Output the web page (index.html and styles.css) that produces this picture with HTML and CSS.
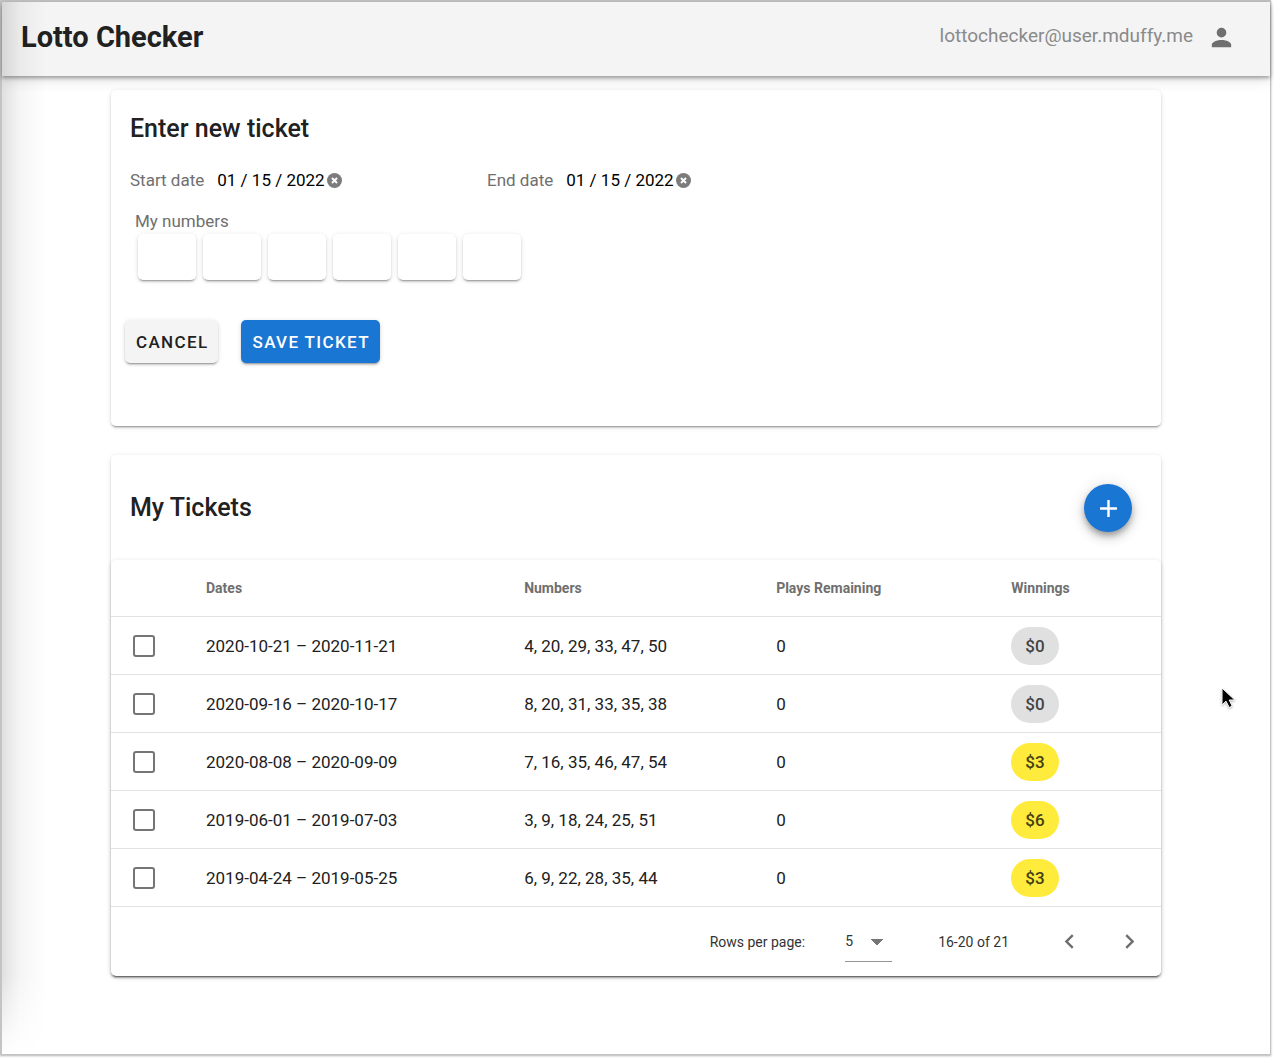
FILE: index.html
```html
<!DOCTYPE html>
<html lang="en">
<head>
<meta charset="utf-8">
<meta name="viewport" content="width=device-width, initial-scale=1">
<title>Lotto Checker</title>
<link rel="stylesheet" href="styles.css">
</head>
<body>
<div class="app">
  <header class="app-bar">
    <h1 class="app-title">Lotto Checker</h1>
    <div class="account">
      <span class="account-email">lottochecker@user.mduffy.me</span>
      <button class="icon-button account-button" type="button" aria-label="Account">
        <svg class="icon icon-account" viewBox="0 0 24 24"><path d="M12 4a4 4 0 1 1 0 8 4 4 0 0 1 0-8m0 10c4.420 0 8 1.790 8 4v2H4v-2c0-2.210 3.580-4 8-4z"/></svg>
      </button>
    </div>
  </header>

  <main class="content">
    <form class="card ticket-form">
      <h2 class="card-title">Enter new ticket</h2>
      <div class="dates">
        <div class="date-field">
          <label for="start-date">Start date</label>
          <input class="date-input" id="start-date" type="text" value="01 / 15 / 2022">
          <button class="icon-button" type="button" aria-label="Clear start date">
            <svg class="icon-clear" viewBox="0 0 16 16"><circle cx="8" cy="8" r="8"/><path d="M5.300 5.300l5.400 5.400M10.700 5.300l-5.400 5.400"/></svg>
          </button>
        </div>
        <div class="date-field">
          <label for="end-date">End date</label>
          <input class="date-input" id="end-date" type="text" value="01 / 15 / 2022">
          <button class="icon-button" type="button" aria-label="Clear end date">
            <svg class="icon-clear" viewBox="0 0 16 16"><circle cx="8" cy="8" r="8"/><path d="M5.300 5.300l5.400 5.400M10.700 5.300l-5.400 5.400"/></svg>
          </button>
        </div>
      </div>
      <fieldset class="numbers">
        <legend>My numbers</legend>
        <div class="number-row">
          <input class="number-input" type="text" inputmode="numeric" aria-label="Number 1">
          <input class="number-input" type="text" inputmode="numeric" aria-label="Number 2">
          <input class="number-input" type="text" inputmode="numeric" aria-label="Number 3">
          <input class="number-input" type="text" inputmode="numeric" aria-label="Number 4">
          <input class="number-input" type="text" inputmode="numeric" aria-label="Number 5">
          <input class="number-input" type="text" inputmode="numeric" aria-label="Number 6">
        </div>
      </fieldset>
      <div class="actions">
        <button class="button" type="button">CANCEL</button>
        <button class="button button-primary" type="submit">SAVE TICKET</button>
      </div>
    </form>

    <section class="card">
      <div class="tickets-head">
        <h2 class="card-title">My Tickets</h2>
        <button class="fab" type="button" aria-label="Add ticket">
          <svg class="icon-plus" viewBox="0 0 24 24"><path d="M19 13h-6v6h-2v-6H5v-2h6V5h2v6h6z"/></svg>
        </button>
      </div>
      <div class="tickets-body">
        <table class="tickets">
          <thead>
            <tr>
              <th class="col-check"></th>
              <th class="col-dates">Dates</th>
              <th class="col-numbers">Numbers</th>
              <th class="col-plays">Plays Remaining</th>
              <th>Winnings</th>
            </tr>
          </thead>
          <tbody>
            <tr>
              <td><input class="checkbox" type="checkbox" aria-label="Select 2020-10-21 – 2020-11-21"></td>
              <td>2020-10-21 – 2020-11-21</td>
              <td>4, 20, 29, 33, 47, 50</td>
              <td>0</td>
              <td><span class="chip">$0</span></td>
            </tr>
            <tr>
              <td><input class="checkbox" type="checkbox" aria-label="Select 2020-09-16 – 2020-10-17"></td>
              <td>2020-09-16 – 2020-10-17</td>
              <td>8, 20, 31, 33, 35, 38</td>
              <td>0</td>
              <td><span class="chip">$0</span></td>
            </tr>
            <tr>
              <td><input class="checkbox" type="checkbox" aria-label="Select 2020-08-08 – 2020-09-09"></td>
              <td>2020-08-08 – 2020-09-09</td>
              <td>7, 16, 35, 46, 47, 54</td>
              <td>0</td>
              <td><span class="chip chip-win">$3</span></td>
            </tr>
            <tr>
              <td><input class="checkbox" type="checkbox" aria-label="Select 2019-06-01 – 2019-07-03"></td>
              <td>2019-06-01 – 2019-07-03</td>
              <td>3, 9, 18, 24, 25, 51</td>
              <td>0</td>
              <td><span class="chip chip-win">$6</span></td>
            </tr>
            <tr>
              <td><input class="checkbox" type="checkbox" aria-label="Select 2019-04-24 – 2019-05-25"></td>
              <td>2019-04-24 – 2019-05-25</td>
              <td>6, 9, 22, 28, 35, 44</td>
              <td>0</td>
              <td><span class="chip chip-win">$3</span></td>
            </tr>
          </tbody>
        </table>
        <div class="pager">
          <label for="page-size">Rows per page:</label>
          <select class="page-size" id="page-size">
            <option>5</option>
            <option>10</option>
            <option>15</option>
          </select>
          <span class="page-range">16-20 of 21</span>
          <div class="page-nav">
            <button class="icon-button" type="button" aria-label="Previous page">
              <svg class="icon" viewBox="0 0 24 24"><path d="M15.410 16.580L10.830 12l4.580-4.590L14 6l-6 6 6 6z"/></svg>
            </button>
            <button class="icon-button" type="button" aria-label="Next page">
              <svg class="icon" viewBox="0 0 24 24"><path d="M8.590 16.580L13.170 12 8.590 7.410 10 6l6 6-6 6z"/></svg>
            </button>
          </div>
        </div>
      </div>
    </section>
  </main>
  <svg class="cursor" viewBox="0 0 18 26" aria-hidden="true"><path d="M2 2v17l4-3.800 3.200 6.300 3-1.400-3-6.100h5.600z"/></svg>
</div>
</body>
</html>
```
FILE: styles.css
```css
*,
*::before,
*::after {
  box-sizing: border-box;
}

body {
  margin: 0;
  background: #fff;
  color: #212121;
  font-family: Roboto, "Liberation Sans", sans-serif;
  font-size: 17px;
  line-height: 24px;
}

h1,
h2 {
  margin: 0;
}

button,
input,
select {
  font: inherit;
}

.app {
  position: relative;
  min-height: calc(100vh - 3px);
  margin: 0 3px 3px 0;
  border: solid #c4c4c4;
  border-width: 2px 1px 1px 2px;
  box-shadow: 0 1px 2px rgba(0, 0, 0, 0.3);
}

.app::before {
  content: "";
  position: absolute;
  z-index: 2;
  inset: 0 auto 0 0;
  width: 44px;
  background: linear-gradient(to right, rgba(0, 0, 0, 0.12), rgba(0, 0, 0, 0.04) 40%, transparent);
  -webkit-mask-image: linear-gradient(#000 calc(100% - 80px), transparent);
  mask-image: linear-gradient(#000 calc(100% - 80px), transparent);
  pointer-events: none;
}

.app-bar {
  display: flex;
  align-items: center;
  justify-content: space-between;
  height: 74px;
  padding: 0 34px 4px 19px;
  background: #f4f4f4;
  box-shadow: 0 2px 4px rgba(0, 0, 0, 0.35), 0 5px 12px rgba(0, 0, 0, 0.1);
}

.app-title {
  font-size: 29px;
  font-weight: 700;
  line-height: 36px;
}

.account {
  display: flex;
  align-items: center;
  gap: 14px;
  color: #8a8a8a;
  font-size: 19px;
}

.account-email {
  padding-bottom: 2px;
}

.icon-button {
  display: flex;
  padding: 0;
  border: 0;
  background: none;
  color: #6f6f6f;
}

.icon {
  width: 29px;
  height: 29px;
  fill: currentColor;
}

.content {
  display: flex;
  flex-direction: column;
  gap: 29px;
  max-width: 1050px;
  margin: 0 auto;
  padding: 14px 0 76px;
}

.card,
.tickets-body,
.number-input,
.button {
  border-radius: 5px;
  box-shadow: 0 3px 1px -2px rgba(0, 0, 0, 0.2), 0 2px 2px rgba(0, 0, 0, 0.14), 0 1px 5px rgba(0, 0, 0, 0.12);
}

.card {
  background: #fff;
}

.card-title {
  font-size: 25px;
  font-weight: 500;
  line-height: 38px;
}

.ticket-form {
  padding: 20px 19px 63px;
}

.dates {
  display: flex;
  margin-top: 20px;
}

.date-field {
  display: flex;
  align-items: center;
  width: 357px;
  color: #6f6f6f;
}

.date-input {
  width: 108px;
  height: 24px;
  margin: 0 2px 0 13px;
  padding: 0;
  border: 0;
  background: none;
  color: #000;
}

.icon-clear {
  width: 15px;
  height: 15px;
  fill: #7c7c7c;
  stroke: #fff;
  stroke-width: 2;
}

.icon-clear circle {
  stroke: none;
}

.numbers {
  min-width: 0;
  margin: 17px 0 0;
  padding: 0 5px;
  border: 0;
}

.numbers legend {
  padding: 0;
  color: #6f6f6f;
}

.number-row {
  display: flex;
  gap: 7px;
  padding: 1px 3px;
}

.number-input {
  width: 58px;
  height: 46px;
  border: 0;
  background: #fff;
  text-align: center;
}

.actions {
  display: flex;
  gap: 23px;
  margin: 39px 0 0 -5px;
}

.button {
  height: 43px;
  padding: 0 10px 0 11px;
  border: 0;
  background: #f4f4f4;
  color: #212121;
  font-weight: 500;
  letter-spacing: 0.08em;
}

.button-primary {
  background: #1976d2;
  color: #fff;
}

.tickets-head {
  display: flex;
  align-items: center;
  justify-content: space-between;
  padding: 29px 29px 28px 19px;
}

.fab {
  display: grid;
  place-items: center;
  width: 48px;
  height: 48px;
  padding: 0;
  border: 0;
  border-radius: 50%;
  background: #1976d2;
  box-shadow: 0 4px 6px -1px rgba(0, 0, 0, 0.3), 0 6px 12px rgba(0, 0, 0, 0.14), 0 1px 18px rgba(0, 0, 0, 0.1);
}

.icon-plus {
  width: 29px;
  height: 29px;
  fill: #fff;
}

.tickets {
  width: 100%;
  border-collapse: separate;
  border-spacing: 0;
  table-layout: fixed;
}

.tickets th,
.tickets td {
  height: 58px;
  padding: 0 19px;
  border-bottom: 1px solid #e2e2e2;
  text-align: left;
}

.tickets th {
  height: 57px;
  color: #6f6f6f;
  font-size: 14px;
  font-weight: 700;
}

.tickets td:first-child {
  padding-left: 22px;
}

.col-check {
  width: 76px;
}

.col-dates {
  width: 30.300%;
}

.col-numbers {
  width: 24%;
}

.col-plays {
  width: 22.400%;
}

.checkbox {
  display: block;
  width: 22px;
  height: 22px;
  margin: 0;
  border: 2px solid #757575;
  border-radius: 3px;
  appearance: none;
}

.chip {
  display: inline-flex;
  align-items: center;
  height: 38px;
  padding: 0 14px;
  border-radius: 19px;
  background: #e0e0e0;
  color: #444;
  font-weight: 500;
}

.chip-win {
  background: #ffeb3b;
  color: #444014;
}

.pager {
  display: flex;
  align-items: center;
  justify-content: flex-end;
  height: 69px;
  padding: 0 17px;
  color: #333;
  font-size: 14px;
}

.page-size {
  width: 47px;
  height: 40px;
  margin: 0 46px 0 40px;
  padding: 0;
  border: 0;
  border-bottom: 1px solid #949494;
  border-radius: 0;
  appearance: none;
  background:
    conic-gradient(from -45deg at 50% 100%, #757575 90deg, transparent 0) 26px 17px / 12px 6px no-repeat;
  color: inherit;
}

.page-nav {
  display: flex;
  gap: 31px;
  margin-left: 46px;
}

.cursor {
  position: absolute;
  top: 684px;
  left: 1218px;
  width: 18px;
  height: 26px;
  fill: #000;
  stroke: #fff;
  stroke-width: 1;
  filter: drop-shadow(0 1px 1px rgba(0, 0, 0, 0.3));
}
```
